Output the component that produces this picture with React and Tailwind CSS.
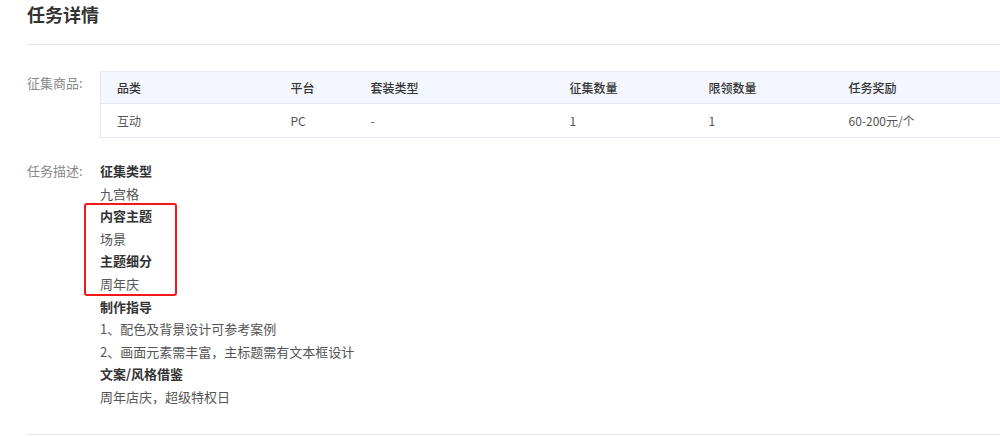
export default function App() {
  const cols = [
    { name: '品类', w: 'w-[174px]' },
    { name: '平台', w: 'w-[80px]' },
    { name: '套装类型', w: 'w-[199px]' },
    { name: '征集数量', w: 'w-[139px]' },
    { name: '限领数量', w: 'w-[140px]' },
    { name: '任务奖励', w: 'w-[200px]' },
  ];
  const row = ['互动', 'PC', '-', '1', '1', '60-200元/个'];

  const desc = [
    { t: '征集类型', b: true },
    { t: '九宫格' },
    { t: '内容主题', b: true },
    { t: '场景' },
    { t: '主题细分', b: true },
    { t: '周年庆' },
    { t: '制作指导', b: true },
    { t: '1、配色及背景设计可参考案例' },
    { t: '2、画面元素需丰富，主标题需有文本框设计' },
    { t: '文案/风格借鉴', b: true },
    { t: '周年店庆，超级特权日' },
  ];

  return (
    <div
      className="w-[1000px] h-[437px] overflow-hidden bg-white pl-[27px]"
      style={{ fontFamily: '"Noto Sans CJK SC", "Noto Sans", sans-serif' }}
    >
      <h1 className="h-[44px] pt-[2px] text-[18px] leading-[24px] font-semibold text-[#333]">任务详情</h1>
      <div className="h-px bg-[#e8e8e8]" />

      <div className="flex mt-[26px]">
        <div className="w-[73px] shrink-0 pt-[2px] text-[13px] leading-[20px] text-[#888]">征集商品:</div>
        <table className="border-collapse text-[12px] text-[#333] table-fixed w-[932px] shrink-0">
          <thead>
            <tr className="bg-[#f4f7fd] h-[32px]">
              {cols.map((c, i) => (
                <th key={c.name} className={`${c.w} text-left font-medium pl-4 border-y border-[#e6e9ef] ${i === 0 ? 'border-l' : ''}`}>
                  {c.name}
                </th>
              ))}
            </tr>
          </thead>
          <tbody>
            <tr className="h-[34px]">
              {row.map((v, i) => (
                <td key={i} className={`pl-4 text-[#555] border-b border-[#e6e9ef] ${i === 0 ? 'border-l' : ''}`}>
                  {v}
                </td>
              ))}
            </tr>
          </tbody>
        </table>
      </div>

      <div className="flex mt-[22px] relative">
        <div className="w-[73px] shrink-0 text-[13px] leading-[22.6px] text-[#888]">任务描述:</div>
        <div className="text-[13px] leading-[22.6px]">
          {desc.map((d, i) => (
            <div key={i} className={d.b ? 'font-bold text-[#333]' : 'text-[#555]'}>
              {d.t}
            </div>
          ))}
        </div>
        <div className="absolute left-[57px] top-[43px] w-[93px] h-[93px] border-2 border-[#f01818] rounded-[3px]" />
      </div>

      <div className="h-px bg-[#e8e8e8] mt-[25px]" />
    </div>
  );
}
